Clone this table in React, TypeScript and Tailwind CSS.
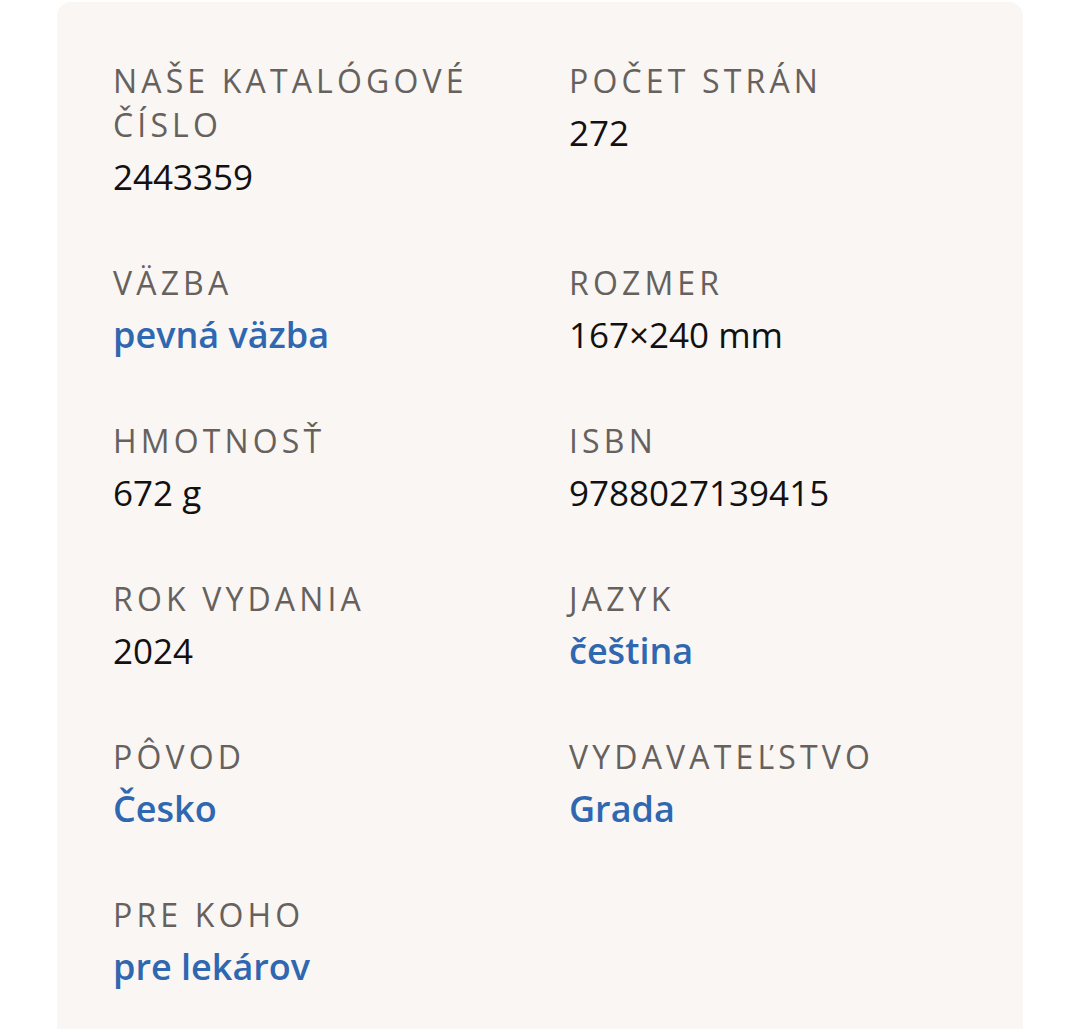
const items: { label: string; value: string; link?: boolean }[] = [
  { label: "Naše katalógové číslo", value: "2443359" },
  { label: "Počet strán", value: "272" },
  { label: "Väzba", value: "pevná väzba", link: true },
  { label: "Rozmer", value: "167×240 mm" },
  { label: "Hmotnosť", value: "672 g" },
  { label: "ISBN", value: "9788027139415" },
  { label: "Rok vydania", value: "2024" },
  { label: "Jazyk", value: "čeština", link: true },
  { label: "Pôvod", value: "Česko", link: true },
  { label: "Vydavateľstvo", value: "Grada", link: true },
  { label: "Pre koho", value: "pre lekárov", link: true },
];

export default function App() {
  return (
    <div className="min-h-[1029px] bg-white pt-[2px] px-[57px] font-['Open_Sans',sans-serif]">
      <div className="bg-[#f9f6f4] rounded-t-[14px] min-h-[1027px] pl-[56px] pr-[40px] pt-[57px]">
        <dl className="grid grid-cols-[456px_1fr] gap-y-[54px]">
          {items.map((item) => (
            <div key={item.label}>
              <dt className="uppercase text-[32px] leading-[44px] tracking-[0.13em] text-[#66615d] max-w-[400px]">
                {item.label}
              </dt>
              <dd
                className={
                  item.link
                    ? "text-[36px] leading-[60px] font-semibold text-[#2f67b0]"
                    : "text-[35px] leading-[60px] text-[#111]"
                }
              >
                {item.value}
              </dd>
            </div>
          ))}
        </dl>
      </div>
    </div>
  );
}
